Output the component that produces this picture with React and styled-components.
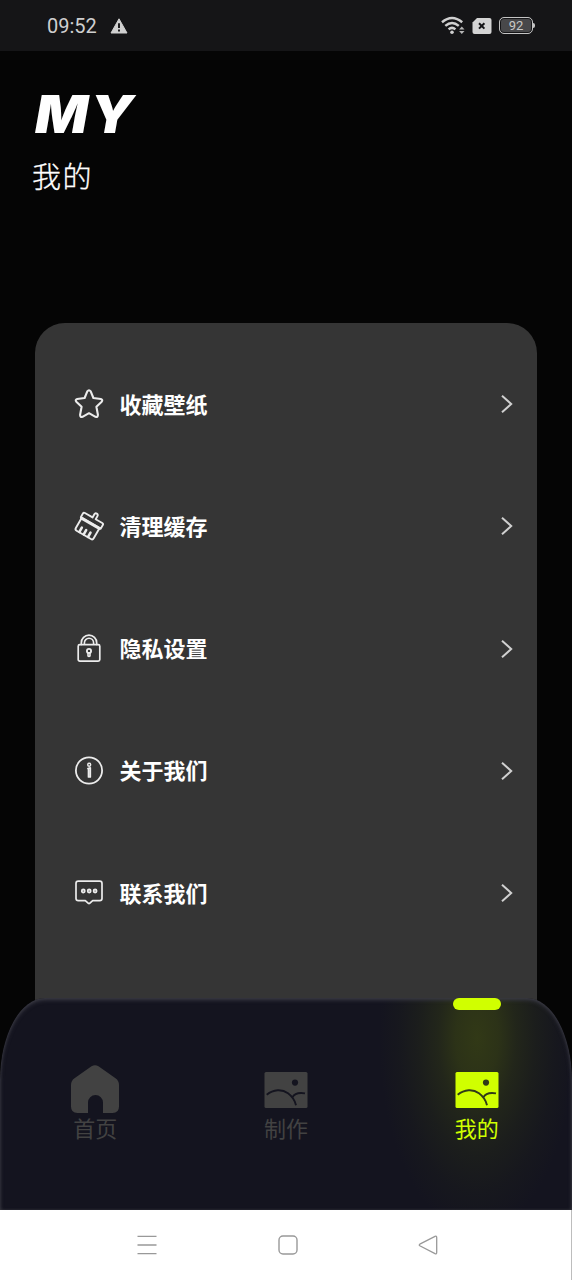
import styled, { createGlobalStyle } from "styled-components";

const GlobalStyle = createGlobalStyle`
  * {
    box-sizing: border-box;
  }
  body {
    margin: 0;
    background: #050505;
    font-family: Roboto, "Noto Sans CJK SC", sans-serif;
  }
  svg {
    display: block;
    flex: none;
  }
`;

const Screen = styled.div`
  display: flex;
  flex-direction: column;
  width: 572px;
  height: 1280px;
  overflow: hidden;
  background: #050505;
`;

const StatusBar = styled.div`
  display: flex;
  flex: none;
  align-items: center;
  height: 51px;
  padding: 0 37px 0 47px;
  background: #151517;
  color: #cfcfcf;
`;

const Time = styled.span`
  width: 63px;
  font-size: 20px;
  line-height: 24px;
`;

const StatusIcons = styled.div`
  display: flex;
  align-items: center;
  gap: 7px;
  margin-left: auto;
`;

const Battery = styled.div`
  display: flex;
  align-items: center;
  gap: 0;
`;

const BatteryBody = styled.div`
  width: 34px;
  height: 17px;
  border: 1.5px solid #c4c4c4;
  border-radius: 5px;
  background: #48484a;
  box-shadow: inset 0 0 0 1px #151517;
  color: #c8c8c8;
  font-size: 13px;
  line-height: 15px;
  text-align: center;
`;

const BatteryTip = styled.div`
  width: 2px;
  height: 5px;
  border-radius: 0 2px 2px 0;
  background: #c4c4c4;
`;

const Header = styled.header`
  flex: none;
  height: 272px;
  padding: 32px 32px 0;
  color: #fff;
`;

const Title = styled.h1`
  margin: 0 0 0 3px;
  font-family: Inter, sans-serif;
  font-size: 52px;
  font-style: italic;
  font-weight: 900;
  line-height: 64px;
  letter-spacing: 2px;
  transform: scaleX(1.07);
  transform-origin: left;
`;

const Subtitle = styled.div`
  margin-top: 11px;
  font-size: 29px;
  font-weight: 300;
  line-height: 40px;
  letter-spacing: 1.5px;
  -webkit-text-stroke: 0.3px #fff;
`;

const Card = styled.section`
  flex: none;
  width: 502px;
  height: 688px;
  margin-left: 35px;
  padding-top: 20px;
  border-radius: 30px 30px 0 0;
  background: #353535;
`;

const MenuItem = styled.div`
  display: flex;
  align-items: center;
  height: 122.25px;
  padding: 0 23px 0 38px;
  color: #fff;
`;

const MenuLabel = styled.span`
  flex: 1;
  margin-left: 14.5px;
  padding-top: 3px;
  font-size: 22px;
  font-weight: 700;
  line-height: 32px;
`;

const TabBar = styled.nav`
  position: relative;
  display: flex;
  flex: none;
  height: 212px;
  margin-top: -13px;
  border-radius: 45px 45px 0 0 / 82px 82px 0 0;
  background:
    radial-gradient(
      ellipse 98px 195px at 477px 40px,
      rgba(84, 100, 12, 0.46),
      rgba(82, 98, 12, 0.39) 22%,
      rgba(72, 86, 14, 0.27) 40%,
      rgba(64, 76, 14, 0.17) 60%,
      rgba(56, 66, 16, 0.08) 80%,
      rgba(40, 48, 20, 0)
    ),
    #14141f;
  box-shadow: inset 0 2px 4px #3b3b45, inset 0 0 3px #303038;
`;

const Tab = styled.div`
  position: relative;
  display: flex;
  flex: 1;
  flex-direction: column;
  align-items: center;
  padding-top: 67px;
  color: ${(props) => (props.$active ? "#d0ff00" : "#424242")};
`;

const TabIcon = styled.div`
  display: flex;
  align-items: center;
  justify-content: center;
  height: 48px;
`;

const TabLabel = styled.span`
  margin-top: 1px;
  font-size: 22px;
  line-height: 32px;
`;

const Indicator = styled.div`
  position: absolute;
  top: 0;
  width: 48px;
  height: 12px;
  border-radius: 6px;
  background: #d0ff00;
`;

const SystemNav = styled.div`
  display: flex;
  flex: none;
  align-items: center;
  justify-content: space-between;
  height: 70px;
  padding: 0 133px 0 136px;
  border-right: 1px solid #bdbdbd;
  background: #fff;
`;

const line = {
  fill: "none",
  stroke: "#ececec",
  strokeWidth: 2.1,
  strokeLinecap: "round",
  strokeLinejoin: "round",
};

const MenuSvg = ({ children }) => (
  <svg width="32" height="32" viewBox="0 0 32 32" {...line}>
    {children}
  </svg>
);

const StarIcon = () => (
  <MenuSvg>
    <path d="M14.3 3.4Q16 1 17.7 3.4L20.4 10L27.8 11Q30.2 11.8 28.7 13.7L23.4 18.7L24.9 26.8Q25 29.5 22.5 28.8L16 25.2L9.5 28.8Q7 29.5 7.1 26.8L8.6 18.7L3.3 13.7Q1.8 11.8 4.2 11L11.6 10Z" />
  </MenuSvg>
);

const BrushIcon = () => (
  <MenuSvg>
    <g transform="rotate(30 16 16)" strokeWidth="1.9">
      <path d="M14.8 6.8V3.2Q14.8 1.4 16.6 1.4T18.4 3.2V6.8H26Q27.5 6.8 27.5 8.3V12.4H4.5V8.3Q4.5 6.8 6 6.8Z" />
      <path d="M5.6 13V24.3Q5.6 26.3 7.6 26.3H24.2Q26.2 26.3 26.2 24.3V13" />
      <path d="M5.6 13H26.2" strokeWidth="2.8" />
      <path d="M10.6 25.8V21M15.6 25.8V21M20.6 25.8V21" strokeWidth="2.6" />
    </g>
  </MenuSvg>
);

const LockIcon = () => (
  <MenuSvg>
    <rect x="5.2" y="11.6" width="21.6" height="16.6" rx="1.6" strokeWidth="1.7" />
    <path d="M8.3 11.4V9.9A7.7 7.7 0 0 1 23.7 9.9V11.4" strokeWidth="1.7" />
    <path d="M11.4 11.2V9.9A4.6 4.6 0 0 1 20.6 9.9V11.2" strokeWidth="1.6" />
    <circle cx="16" cy="17.9" r="2.1" strokeWidth="1.8" />
    <path d="M15 20V22.9Q16 24 17 22.9V20" strokeWidth="1.6" />
  </MenuSvg>
);

const InfoIcon = () => (
  <MenuSvg>
    <circle cx="16" cy="15.5" r="13.1" strokeWidth="1.8" />
    <circle cx="16.2" cy="9.8" r="1.5" strokeWidth="1.4" />
    <path d="M14.9 13.6L17.3 12.8V22H15.5V13.6" strokeWidth="1.7" />
  </MenuSvg>
);

const ChatIcon = () => (
  <MenuSvg>
    <path
      d="M5.3 4.2H26.7Q29 4.2 29 6.4V21.4Q29 23.6 26.7 23.6H19.7L16.6 26.4Q16 26.9 15.4 26.4L12.3 23.6H5.3Q3 23.6 3 21.4V6.4Q3 4.2 5.3 4.2Z"
      strokeWidth="1.7"
    />
    <circle cx="10.3" cy="14" r="1.5" strokeWidth="1.8" />
    <circle cx="16.2" cy="14" r="1.5" strokeWidth="1.8" />
    <circle cx="22.1" cy="14" r="1.5" strokeWidth="1.8" />
  </MenuSvg>
);

const Chevron = () => (
  <svg width="16" height="20" viewBox="0 0 16 20" fill="none" stroke="#d0d0d0" strokeWidth="2">
    <path d="M4 1.8L13.2 10L4 18.2" />
  </svg>
);

const WarningIcon = () => (
  <svg width="18" height="16" viewBox="0 0 18 16">
    <path d="M9 .8L17 15H1Z" fill="#d0d0d0" stroke="#d0d0d0" strokeLinejoin="round" />
    <path d="M9 5.3V10M9 11.6V13.4" stroke="#151517" strokeWidth="1.9" />
  </svg>
);

const WifiIcon = () => (
  <svg width="24" height="19" viewBox="0 0 24 19" fill="none" stroke="#d0d0d0" strokeWidth="2.5">
    <path d="M1 6.2Q11 -2.2 21.2 6.2" />
    <path d="M4.3 9.9Q11 4.2 17.8 9.9" />
    <path d="M7.6 13.4Q11 10.4 14.4 13.4" />
    <circle cx="11" cy="16.2" r="1.8" fill="#d0d0d0" stroke="none" />
    <path d="M20.8 10.6L23.5 13.6H18.1ZM20.8 18L23.5 15H18.1Z" fill="#b5b5b5" stroke="none" />
  </svg>
);

const SimIcon = () => (
  <svg width="20" height="16" viewBox="0 0 20 16">
    <path d="M5 0H17.5Q19.5 0 19.5 2V14Q19.5 16 17.5 16H2.5Q.5 16 .5 14V4.5Z" fill="#d4d4d4" />
    <path d="M7 5.2L12.4 10.6M12.4 5.2L7 10.6" stroke="#151517" strokeWidth="2" />
  </svg>
);

const HomeIcon = () => (
  <svg width="48" height="48" viewBox="0 0 48 48">
    <path
      d="M20.5 1.3Q24 -1 27.5 1.3L44.5 13.3Q48 15.8 48 20V41.5Q48 48 41.5 48H32V37.5A7.5 7.5 0 0 0 17 37.5V48H6.5Q0 48 0 41.5V20Q0 15.8 3.5 13.3Z"
      fill="currentColor"
    />
  </svg>
);

const PictureIcon = ({ ink }) => (
  <svg width="44" height="50" viewBox="0 -8 44 50">
    <rect x=".5" width="43" height="36" rx="1.5" fill="currentColor" />
    <circle cx="31" cy="10.6" r="3.1" fill={ink} />
    <path
      d="M2.7 22.8C9.5 17.2 18 16.9 24 21.2C28.8 24.8 31 28.5 32 33.2M28.2 25.6C30.5 21.5 35 20.3 41 21.4"
      fill="none"
      stroke={ink}
      strokeWidth="1.9"
    />
  </svg>
);

const menu = [
  { label: "收藏壁纸", Icon: StarIcon },
  { label: "清理缓存", Icon: BrushIcon },
  { label: "隐私设置", Icon: LockIcon },
  { label: "关于我们", Icon: InfoIcon },
  { label: "联系我们", Icon: ChatIcon },
];

function App() {
  return (
    <Screen>
      <GlobalStyle />
      <StatusBar>
        <Time>09:52</Time>
        <WarningIcon />
        <StatusIcons>
          <WifiIcon />
          <SimIcon />
          <Battery>
            <BatteryBody>92</BatteryBody>
            <BatteryTip />
          </Battery>
        </StatusIcons>
      </StatusBar>
      <Header>
        <Title>MY</Title>
        <Subtitle>我的</Subtitle>
      </Header>
      <Card>
        {menu.map(({ label, Icon }) => (
          <MenuItem key={label}>
            <Icon />
            <MenuLabel>{label}</MenuLabel>
            <Chevron />
          </MenuItem>
        ))}
      </Card>
      <TabBar>
        <Tab>
          <TabIcon>
            <HomeIcon />
          </TabIcon>
          <TabLabel>首页</TabLabel>
        </Tab>
        <Tab>
          <TabIcon>
            <PictureIcon ink='#14141f' />
          </TabIcon>
          <TabLabel>制作</TabLabel>
        </Tab>
        <Tab $active>
          <Indicator />
          <TabIcon>
            <PictureIcon ink='#303a18' />
          </TabIcon>
          <TabLabel>我的</TabLabel>
        </Tab>
      </TabBar>
      <SystemNav>
        <svg width="22" height="20" viewBox="0 0 22 20" stroke="#999" strokeWidth="1.3">
          <path d="M1.5 1.3H20.5M1.5 10H20.5M1.5 18.7H20.5" />
        </svg>
        <svg width="20" height="20" viewBox="0 0 20 20" fill="none" stroke="#999" strokeWidth="1.4">
          <rect x="1" y="1" width="18" height="18" rx="4" />
        </svg>
        <svg width="20" height="20" viewBox="0 0 20 20" fill="none" stroke="#999" strokeWidth="1.3">
          <path d="M1.8 9.2L17 1.3Q18.7 .7 18.7 2.4V17.6Q18.7 19.3 17 18.7L1.8 10.8Q.7 10 1.8 9.2Z" />
        </svg>
      </SystemNav>
    </Screen>
  );
}

export default App;
